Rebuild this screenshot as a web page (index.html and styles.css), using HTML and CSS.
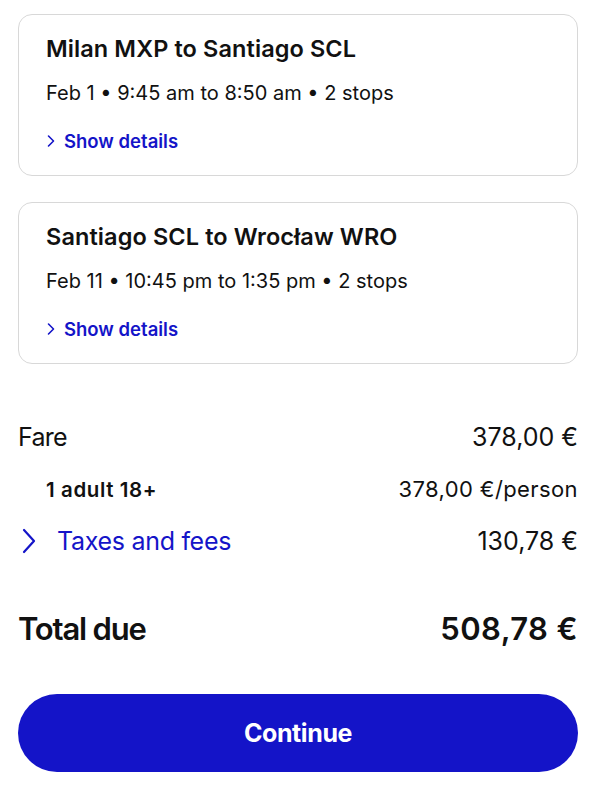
FILE: index.html
```html
<!DOCTYPE html>
<html lang="en">
<head>
    <meta charset="UTF-8">
    <meta name="viewport" content="width=device-width, initial-scale=1.0">
    <title>Trip summary</title>
    <link rel="stylesheet" href="styles.css">
</head>
<body>
    <div class="page">
        <div class="leg">
            <h2 class="leg-title">Milan MXP to Santiago SCL</h2>
            <p class="leg-info">Feb 1 • 9:45 am to 8:50 am • 2 stops</p>
            <a class="details" href="#">
                <svg class="chev-small" viewBox="0 0 10 14" width="10" height="14"><path d="M2.5 2 L7.5 7 L2.5 12" fill="none" stroke="currentColor" stroke-width="1.6" stroke-linecap="round" stroke-linejoin="round"/></svg>
                Show details
            </a>
        </div>

        <div class="leg">
            <h2 class="leg-title">Santiago SCL to Wrocław WRO</h2>
            <p class="leg-info">Feb 11 • 10:45 pm to 1:35 pm • 2 stops</p>
            <a class="details" href="#">
                <svg class="chev-small" viewBox="0 0 10 14" width="10" height="14"><path d="M2.5 2 L7.5 7 L2.5 12" fill="none" stroke="currentColor" stroke-width="1.6" stroke-linecap="round" stroke-linejoin="round"/></svg>
                Show details
            </a>
        </div>

        <div class="prices">
            <div class="row">
                <span class="label">Fare</span>
                <span class="amount">378,00 €</span>
            </div>
            <div class="row sub">
                <span class="label adult">1 adult 18+</span>
                <span class="amount">378,00 €/person</span>
            </div>
            <div class="row">
                <a class="taxes" href="#">
                    <svg class="chev-big" viewBox="0 0 16 28" width="16" height="28"><path d="M3 3 L13 14 L3 25" fill="none" stroke="currentColor" stroke-width="2.2" stroke-linecap="round" stroke-linejoin="round"/></svg>
                    Taxes and fees
                </a>
                <span class="amount">130,78 €</span>
            </div>
            <div class="row total">
                <span class="label">Total due</span>
                <span class="amount">508,78 €</span>
            </div>
        </div>

        <button class="continue">Continue</button>
    </div>
</body>
</html>
```

FILE: styles.css
```css
* {
    padding: 0;
    margin: 0;
    box-sizing: border-box;
}

body {
    font-family: Inter, "Open Sans", sans-serif;
    color: #111;
    background: #fff;
}

.page {
    padding: 14px 22px 0 18px;
}

.leg {
    border: 1px solid #d8d8d8;
    border-radius: 14px;
    padding: 20px 27px 23px;
    margin-bottom: 26px;
}

.leg-title {
    font-size: 23.5px;
    line-height: 28px;
    font-weight: 600;
    letter-spacing: 0.1px;
}

.leg-info {
    margin-top: 18px;
    font-size: 20px;
    line-height: 24px;
}

.details {
    margin-top: 25px;
    display: flex;
    align-items: center;
    gap: 8px;
    font-size: 18.5px;
    line-height: 22px;
    font-weight: 600;
    color: #1414c8;
    text-decoration: none;
}

.prices {
    margin-top: 47px;
}

.row {
    display: flex;
    justify-content: space-between;
    align-items: center;
    height: 52px;
    font-size: 25px;
}

.row .label {
    letter-spacing: -0.7px;
}

.row.sub {
    font-size: 22px;
    padding-left: 28px;
}

.row.sub .amount {
    letter-spacing: 0.4px;
}

.adult {
    font-size: 20.5px;
    font-weight: 600;
}

.row.sub .adult {
    letter-spacing: 0.6px;
}

.taxes {
    display: flex;
    align-items: center;
    gap: 20px;
    color: #1414c8;
    text-decoration: none;
    padding-left: 3px;
    letter-spacing: -0.3px;
}

.row.total {
    margin-top: 35px;
    font-size: 31px;
    font-weight: 600;
}

.row.total .label {
    letter-spacing: -1.2px;
}

.row.total .amount {
    letter-spacing: 0.4px;
}

.continue {
    display: block;
    width: 100%;
    height: 78px;
    margin-top: 40px;
    border: none;
    border-radius: 39px;
    background-color: #1414c8;
    color: #fff;
    font-family: inherit;
    font-size: 25px;
    font-weight: 700;
    letter-spacing: -0.4px;
    cursor: pointer;
}
```
